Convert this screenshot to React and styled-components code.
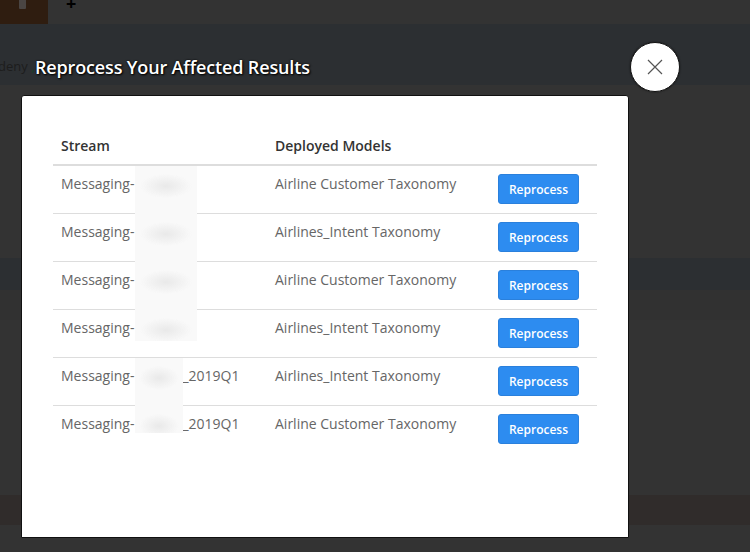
import React from "react";
import styled, { createGlobalStyle } from "styled-components";

const GlobalStyle = createGlobalStyle`
  html, body {
    margin: 0;
    padding: 0;
    background: #333333;
    font-family: "Open Sans", "Liberation Sans", sans-serif;
  }
  * {
    box-sizing: border-box;
  }
`;

const Page = styled.div`
  width: 750px;
  height: 552px;
  overflow: hidden;
  position: relative;
  display: flex;
  flex-direction: column;
  background: #333333;
`;

const TopBar = styled.div`
  height: 24px;
  display: flex;
  align-items: flex-start;
  background: #333333;
`;

const BrownTab = styled.div`
  width: 48px;
  height: 24px;
  background: #2f1d10;
  display: flex;
  justify-content: center;
`;

const TabIcon = styled.div`
  width: 7px;
  height: 9px;
  margin-right: 4px;
  background: #4a4543;
  border-radius: 0 0 1px 1px;
`;

const Plus = styled.div`
  margin-left: 18px;
  margin-top: -6px;
  font-size: 18px;
  font-weight: 700;
  color: #000;
  line-height: 18px;
`;

const SubBar = styled.div`
  height: 61px;
  background: #2c2f32;
  display: flex;
  align-items: flex-end;
  padding-bottom: 10px;
`;

const FaintText = styled.span`
  font-size: 13px;
  color: #1d1d1d;
  margin-left: -2px;
  b {
    color: #16402a;
    font-weight: 400;
  }
`;

const Band = styled.div`
  height: ${(p) => p.h}px;
  background: ${(p) => p.bg || "#333333"};
`;

const Overlay = styled.div`
  position: absolute;
  inset: 0;
`;

const ModalTitle = styled.h2`
  position: absolute;
  left: 35px;
  top: 55px;
  margin: 0;
  font-size: 18px;
  font-weight: 600;
  color: #fff;
  letter-spacing: -0.15px;
  text-shadow: 1px 1px 2px #000, 0 0 2px #000;
`;

const CloseButton = styled.button`
  position: absolute;
  left: 630px;
  top: 42px;
  width: 50px;
  height: 50px;
  border-radius: 50%;
  background: #fff;
  border: 1px solid #111;
  box-shadow: 0 0 2px rgba(0, 0, 0, 0.6);
  display: flex;
  align-items: center;
  justify-content: center;
  padding: 0;
  cursor: pointer;
`;

const Modal = styled.div`
  position: absolute;
  left: 21px;
  top: 95px;
  width: 608px;
  height: 443px;
  background: #fff;
  border: 1px solid #111;
  border-radius: 3px 3px 0 0;
  padding: 31px 31px;
`;

const Table = styled.table`
  width: 544px;
  border-collapse: collapse;
  font-size: 14px;
  line-height: 20px;
`;

const Th = styled.th`
  text-align: left;
  font-weight: 600;
  color: #333;
  padding: 9px 8px 8px;
  border-bottom: 2px solid #dddddd;
  width: ${(p) => p.w || "auto"};
`;

const Td = styled.td`
  color: #666;
  padding: 8px 8px 9px;
  vertical-align: top;
  border-top: ${(p) => (p.first ? "none" : "1px solid #dddddd")};
`;

const StreamCell = styled(Td)`
  position: relative;
`;

const Redact = styled.span`
  position: absolute;
  left: 82px;
  top: 0;
  width: ${(p) => p.w}px;
  height: ${(p) => p.h}px;
  background-color: #f9f9f9;
  background-image: radial-gradient(
    ellipse ${(p) => Math.round(p.w * 0.42)}px 12px at 50% 20px,
    #e9e9e9 0%,
    #f1f1f1 50%,
    rgba(249, 249, 249, 0) 100%
  );
  background-size: 100% 48px;
  background-repeat: repeat-y;
  z-index: 1;
`;

const ReprocessButton = styled.button`
  width: 81px;
  height: 30px;
  background: #2d8cf0;
  color: #fff;
  border: 1px solid #2a80dc;
  border-radius: 3px;
  font-family: "Open Sans", "Liberation Sans", sans-serif;
  font-size: 12px;
  font-weight: 600;
  cursor: pointer;
  padding: 0;
`;

const Suffix = styled.span`
  margin-left: 48px;
`;

const rows = [
  { stream: "Messaging-", model: "Airline Customer Taxonomy" },
  { stream: "Messaging-", model: "Airlines_Intent Taxonomy" },
  { stream: "Messaging-", model: "Airline Customer Taxonomy" },
  { stream: "Messaging-", model: "Airlines_Intent Taxonomy" },
  { stream: "Messaging-", suffix: "_2019Q1", model: "Airlines_Intent Taxonomy" },
  { stream: "Messaging-", suffix: "_2019Q1", model: "Airline Customer Taxonomy" },
];

export default function App() {
  return (
    <>
      <GlobalStyle />
      <Page>
        <TopBar>
          <BrownTab>
            <TabIcon />
          </BrownTab>
          <Plus>+</Plus>
        </TopBar>
        <SubBar>
          <FaintText>
            deny <b>,</b>
          </FaintText>
        </SubBar>
        <Band h={173} />
        <Band h={32} bg="#2c2f32" />
        <Band h={30} bg="#313131" />
        <Band h={175} />
        <Band h={30} bg="#302c2b" />
        <Band h={27} />

        <Overlay>
          <ModalTitle>Reprocess Your Affected Results</ModalTitle>
          <CloseButton aria-label="Close">
            <svg width="16" height="16" viewBox="0 0 16 16">
              <path d="M1 1 L15 15 M15 1 L1 15" stroke="#555" strokeWidth="1.2" fill="none" />
            </svg>
          </CloseButton>
          <Modal>
            <Table>
              <thead>
                <tr>
                  <Th w="214px">Stream</Th>
                  <Th w="223px">Deployed Models</Th>
                  <Th />
                </tr>
              </thead>
              <tbody>
                {rows.map((r, i) => (
                  <tr key={i}>
                    <StreamCell first={i === 0}>
                      {i === 0 && <Redact w={62} h={175} />}
                      {i === 4 && <Redact w={48} h={75} />}
                      {r.stream}
                      {r.suffix && <Suffix>{r.suffix}</Suffix>}
                    </StreamCell>
                    <Td first={i === 0}>{r.model}</Td>
                    <Td first={i === 0}>
                      <ReprocessButton>Reprocess</ReprocessButton>
                    </Td>
                  </tr>
                ))}
              </tbody>
            </Table>
          </Modal>
        </Overlay>
      </Page>
    </>
  );
}
